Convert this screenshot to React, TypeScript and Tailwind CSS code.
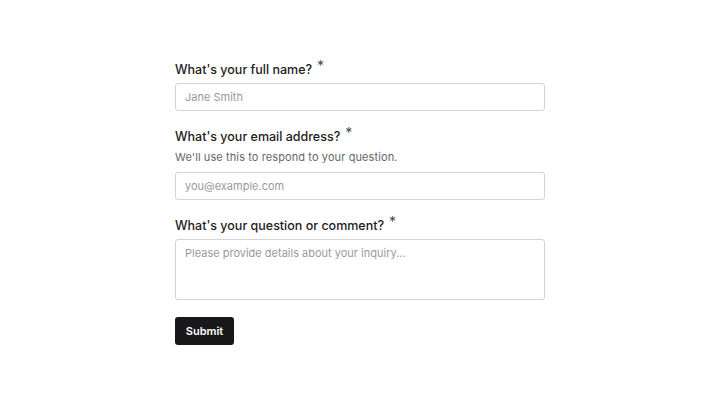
import React from 'react';

function Label({ children }: { children: React.ReactNode }) {
    return (
        <label className="flex items-start text-[12.5px] leading-5 font-medium text-[#1c1c1c]">
            <span>{children}</span>
            <span className="ml-[5px] mt-[-1px] text-[14px] leading-[14px] font-normal text-[#4a4a4a]">*</span>
        </label>
    );
}

export default function App() {
    return (
        <div className="min-h-screen w-full bg-white flex items-center justify-center font-['Inter',sans-serif]">
            <form className="w-[370px] flex flex-col" onSubmit={(e) => e.preventDefault()}>
                <Label>What's your full name?</Label>
                <input
                    type="text"
                    placeholder="Jane Smith"
                    className="mt-[3px] h-[28px] w-full rounded-[3px] border border-[#d4d4d4] bg-white px-[9px] text-[11px] text-[#1c1c1c] placeholder:text-[#9a9a9a] outline-none"
                />

                <div className="mt-[16px]">
                    <Label>What's your email address?</Label>
                </div>
                <p className="text-[11px] leading-5 tracking-[0.1px] text-[#666666]">We'll use this to respond to your question.</p>
                <input
                    type="email"
                    placeholder="you@example.com"
                    className="mt-[5px] h-[28px] w-full rounded-[3px] border border-[#d4d4d4] bg-white px-[9px] text-[11px] text-[#1c1c1c] placeholder:text-[#9a9a9a] outline-none"
                />

                <div className="mt-[16px]">
                    <Label>What's your question or comment?</Label>
                </div>
                <textarea
                    placeholder="Please provide details about your inquiry..."
                    className="mt-[3px] h-[61px] w-full resize-none rounded-[3px] border border-[#d4d4d4] bg-white px-[9px] py-[5px] text-[11px] leading-[16px] text-[#1c1c1c] placeholder:text-[#9a9a9a] outline-none"
                />

                <div className="mt-[17px]">
                    <button
                        type="submit"
                        className="h-[28px] w-[59px] rounded-[3px] bg-[#18181a] text-[11px] font-semibold text-white"
                    >
                        Submit
                    </button>
                </div>
            </form>
        </div>
    );
}
